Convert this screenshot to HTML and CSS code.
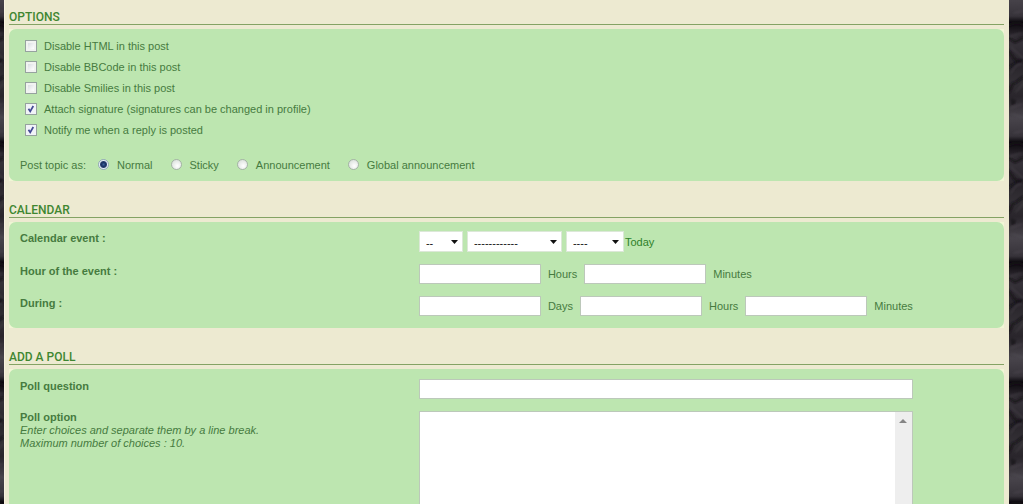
FILE: index.html
```
<!DOCTYPE html>
<html lang="en">
<head>
<meta charset="utf-8">
<title>Post a new topic</title>
<link rel="stylesheet" href="styles.css">
</head>
<body>
<svg class="backdrop" aria-hidden="true">
  <defs>
    <linearGradient id="shade" x1="0" y1="0" x2="0" y2="1">
      <stop offset="0" stop-color="#0d0a0f"/>
      <stop offset=".06" stop-color="#1b171d"/>
      <stop offset=".15" stop-color="#37333a"/>
      <stop offset=".35" stop-color="#29252b"/>
      <stop offset=".5" stop-color="#333035"/>
      <stop offset=".62" stop-color="#29252b"/>
      <stop offset=".8" stop-color="#48444b"/>
      <stop offset=".95" stop-color="#37333a"/>
      <stop offset="1" stop-color="#0d0a0f"/>
    </linearGradient>
    <filter id="soft"><feGaussianBlur stdDeviation="0.8"/></filter>
    <pattern id="bark" x="1009" y="22" width="34" height="120" patternUnits="userSpaceOnUse">
      <rect width="34" height="120" fill="url(#shade)"/>
      <g fill="none" stroke-linecap="round" filter="url(#soft)">
        <path d="M0 3q8-4 15 0M0 29l6 9 8 3M1 45l12-8M6 61l8-6M0 70l4-9M0 16l6 4 8-4M30 12l3 13-4 12 4 12M31 57l2 18M30 86l3 11" stroke="#151117" stroke-width="2"/>
        <path d="M1 14l12-3M2 25l12 11M2 51l5-7 7-3M7 70l7-8M2 86l11-4M3 92l11 3M5 111l9-2M31 5l2 15M32 64l1 16M31 92l2 16" stroke="#5b565e" stroke-width="1" opacity=".6"/>
        <path d="M3 77v6M6 78l-1 4" stroke="#0a070c" stroke-width="1"/>
      </g>
    </pattern>
  </defs>
  <rect width="100%" height="100%" fill="url(#bark)"/>
</svg>
<main class="page">
  <form>
    <section>
      <h2>OPTIONS</h2>
      <div class="panel"><div class="panel-body options">
        <label class="check"><input type="checkbox">Disable HTML in this post</label>
        <label class="check"><input type="checkbox">Disable BBCode in this post</label>
        <label class="check"><input type="checkbox">Disable Smilies in this post</label>
        <label class="check"><input type="checkbox" checked>Attach signature (signatures can be changed in profile)</label>
        <label class="check"><input type="checkbox" checked>Notify me when a reply is posted</label>
        <div class="topic-type" role="radiogroup" aria-labelledby="type-label">
          <span id="type-label">Post topic as:</span>
          <label><input type="radio" name="type" checked>Normal</label>
          <label><input type="radio" name="type">Sticky</label>
          <label><input type="radio" name="type">Announcement</label>
          <label><input type="radio" name="type">Global announcement</label>
        </div>
      </div></div>
    </section>
    <section>
      <h2>CALENDAR</h2>
      <div class="panel"><div class="panel-body calendar">
        <div class="row">
          <label class="name" for="day">Calendar event :</label>
          <div class="dates">
            <select id="day" class="day"><option>--</option></select>
            <select class="month" aria-label="Month"><option>------------</option></select>
            <select class="year" aria-label="Year"><option>----</option></select>
            <a href="#">Today</a>
          </div>
        </div>
        <div class="row">
          <label class="name" for="hour">Hour of the event :</label>
          <div class="times">
            <input type="text" id="hour"><label for="hour">Hours</label>
            <input type="text" id="minute"><label for="minute">Minutes</label>
          </div>
        </div>
        <div class="row">
          <label class="name" for="days">During :</label>
          <div class="times">
            <input type="text" id="days"><label for="days">Days</label>
            <input type="text" id="hours"><label for="hours">Hours</label>
            <input type="text" id="minutes"><label for="minutes">Minutes</label>
          </div>
        </div>
      </div></div>
    </section>
    <section>
      <h2>ADD A POLL</h2>
      <div class="panel"><div class="panel-body poll">
        <div class="row">
          <label class="name" for="question">Poll question</label>
          <div><input type="text" id="question" class="wide"></div>
        </div>
        <div class="row">
          <div class="option-name">
            <label class="name" for="choices">Poll option</label>
            <p class="hint">Enter choices and separate them by a line break.<br>Maximum number of choices : 10.</p>
          </div>
          <div><div class="wide area"><textarea id="choices"></textarea></div></div>
        </div>
      </div></div>
    </section>
  </form>
</main>
</body>
</html>
```
FILE: styles.css
```
* {
  box-sizing: border-box;
}

body {
  margin: 0;
  overflow: hidden;
  background: #2b272d;
  color: #467b3f;
  font: 11px/14px "Liberation Sans", Arial, sans-serif;
}

.backdrop {
  position: fixed;
  inset: 0;
  z-index: -1;
  width: 100%;
  height: 100%;
}

.page {
  margin: 0 14px 0 4px;
  padding: 0 5px 20px 4px;
  border-left: 1px solid #f8f2df;
  background: #edead1;
}

section {
  padding-top: 20px;
}

section:first-child {
  padding-top: 8px;
}

h2 {
  margin: 0 0 4px;
  padding-top: 2px;
  border-bottom: 1px solid #84a364;
  color: #3f8630;
  font: 500 12px/14px Roboto, sans-serif;
}

.panel {
  background: #f0f6d5;
}

.panel-body {
  border-radius: 7px;
  background: #bde6b0;
}

.options {
  padding: 6px 11px 5px;
}

.check {
  display: flex;
  align-items: center;
  gap: 7px;
  height: 21px;
  padding-left: 5px;
}

input,
select,
textarea {
  appearance: none;
  margin: 0;
  border: 1px solid #bcc8ba;
  border-radius: 0;
  background: #fff;
  font: inherit;
}

input[type="checkbox"] {
  width: 12px;
  height: 12px;
  border: 1px solid #96a29f;
  background: linear-gradient(135deg, #cdd2d8, #fff 80%);
  box-shadow: inset 0 0 0 2px #f1f3f1;
}

input[type="checkbox"]:checked {
  background: #f1f3f8 url("data:image/svg+xml,%3Csvg xmlns='http://www.w3.org/2000/svg' width='8' height='8'%3E%3Cpath d='M1.5 3.8L3.2 6.4 6.3 1' fill='none' stroke='%23434a94' stroke-width='1.7'/%3E%3C/svg%3E") no-repeat center;
  box-shadow: none;
}

.topic-type {
  display: flex;
  align-items: center;
  height: 21px;
  margin-top: 14px;
  margin-bottom: 1px;
}

.topic-type label {
  display: flex;
  align-items: center;
  gap: 8px;
  margin-right: 18px;
}

#type-label {
  margin-right: 12px;
}

input[type="radio"] {
  width: 11px;
  height: 11px;
  border: 1px solid #a5b3a7;
  border-radius: 50%;
  background: radial-gradient(circle at 60% 65%, #fff, #d3dad5);
}

input[type="radio"]:checked {
  border-color: #93a8ba;
  background: radial-gradient(circle at 50% 50%, #3d649a 0, #1b3266 2px, #2a4272 3px, #e6eff4 4px);
}

.row {
  display: grid;
  grid-template-columns: 41% 1fr;
}

.name {
  font-weight: bold;
}

.calendar {
  display: grid;
  gap: 12px;
  padding: 9px 11px 12px;
}

.dates,
.times {
  display: flex;
  align-items: center;
}

.dates {
  height: 21px;
  gap: 4px;
}

select {
  height: 21px;
  padding: 2px 6px 0;
  border-color: #dce8d8;
  background: #fff url("data:image/svg+xml,%3Csvg xmlns='http://www.w3.org/2000/svg' width='7' height='4'%3E%3Cpath d='M0 0h7L3.5 4z' fill='%23111'/%3E%3C/svg%3E") no-repeat right 4px center;
  color: #111;
}

.day {
  width: 44px;
}

.month {
  width: 95px;
}

.year {
  width: 58px;
}

.dates a {
  margin-left: -3px;
  color: #2e812a;
  text-decoration: none;
}

.times {
  gap: 7px;
}

.times input {
  width: 122px;
  height: 20px;
}

.poll {
  display: grid;
  gap: 12px;
  padding: 10px 11px 12px;
}

.wide {
  display: block;
  width: 86%;
  height: 20px;
}

.area {
  position: relative;
  height: 140px;
}

.area::after {
  content: "";
  position: absolute;
  top: 8px;
  right: 6px;
  border: solid transparent;
  border-width: 0 4px 4px;
  border-bottom-color: #858585;
}

textarea {
  display: block;
  width: 100%;
  height: 100%;
  padding: 2px 20px 2px 2px;
  background: linear-gradient(#eee, #eee) no-repeat right / 17px 100% #fff;
  overflow: hidden;
  resize: none;
}

.option-name {
  line-height: 13px;
}

.hint {
  margin: 0;
  font-style: italic;
}
```
